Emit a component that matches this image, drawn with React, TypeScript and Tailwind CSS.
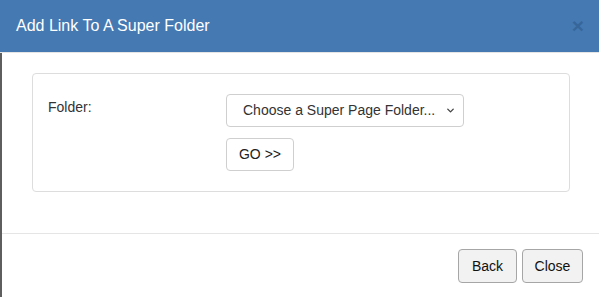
import { ChevronDown } from "lucide-react";

export default function App() {
  return (
    <div
      className="w-[599px] h-[297px] bg-white flex flex-col overflow-hidden text-[#333]"
      style={{ fontFamily: '"Liberation Sans", Arial, sans-serif' }}
    >
      <div className="h-[53px] shrink-0 bg-[#4579b2] border-b border-[#e5e5e5] flex items-center justify-between pl-4 pr-[15px]">
        <h4 className="text-[16px] text-white leading-none">Add Link To A Super Folder</h4>
        <button className="text-[21px] font-bold leading-none text-[#2f5b8c] opacity-60 -mt-0.5">×</button>
      </div>

      <div className="flex-1 flex flex-col border-l-2 border-[#5e5e5e]">
        <div className="h-[180px] pt-[20px] pl-[30px] pr-[29px]">
          <div className="h-[119px] border border-[#dddddd] rounded-[4px] flex pl-[15px] pt-[20px]">
            <div className="w-[178px] text-[14px] text-[#333] pt-[3px]">Folder:</div>
            <div className="flex flex-col gap-[11px]">
              <div className="w-[238px] h-[33px] border border-[#cfcfcf] rounded-[4px] flex items-center justify-between pl-[16px] pr-[7px] text-[14px] text-[#333]">
                <span>Choose a Super Page Folder...</span>
                <ChevronDown size={11} strokeWidth={3} className="text-[#444]" />
              </div>
              <button className="w-[68px] h-[33px] border border-[#cfcfcf] rounded-[4px] text-[14px] text-[#222] bg-white">
                GO &gt;&gt;
              </button>
            </div>
          </div>
        </div>

        <div className="flex-1 border-t border-[#e5e5e5] flex justify-end items-start gap-[5px] pt-[15px] pr-[16px]">
          <button className="w-[59px] h-[34px] border border-[#a6a6a6] rounded-[4px] bg-[#f2f2f2] text-[14px] text-[#111]">
            Back
          </button>
          <button className="w-[61px] h-[34px] border border-[#a6a6a6] rounded-[4px] bg-[#f2f2f2] text-[14px] text-[#111]">
            Close
          </button>
        </div>
      </div>
    </div>
  );
}
